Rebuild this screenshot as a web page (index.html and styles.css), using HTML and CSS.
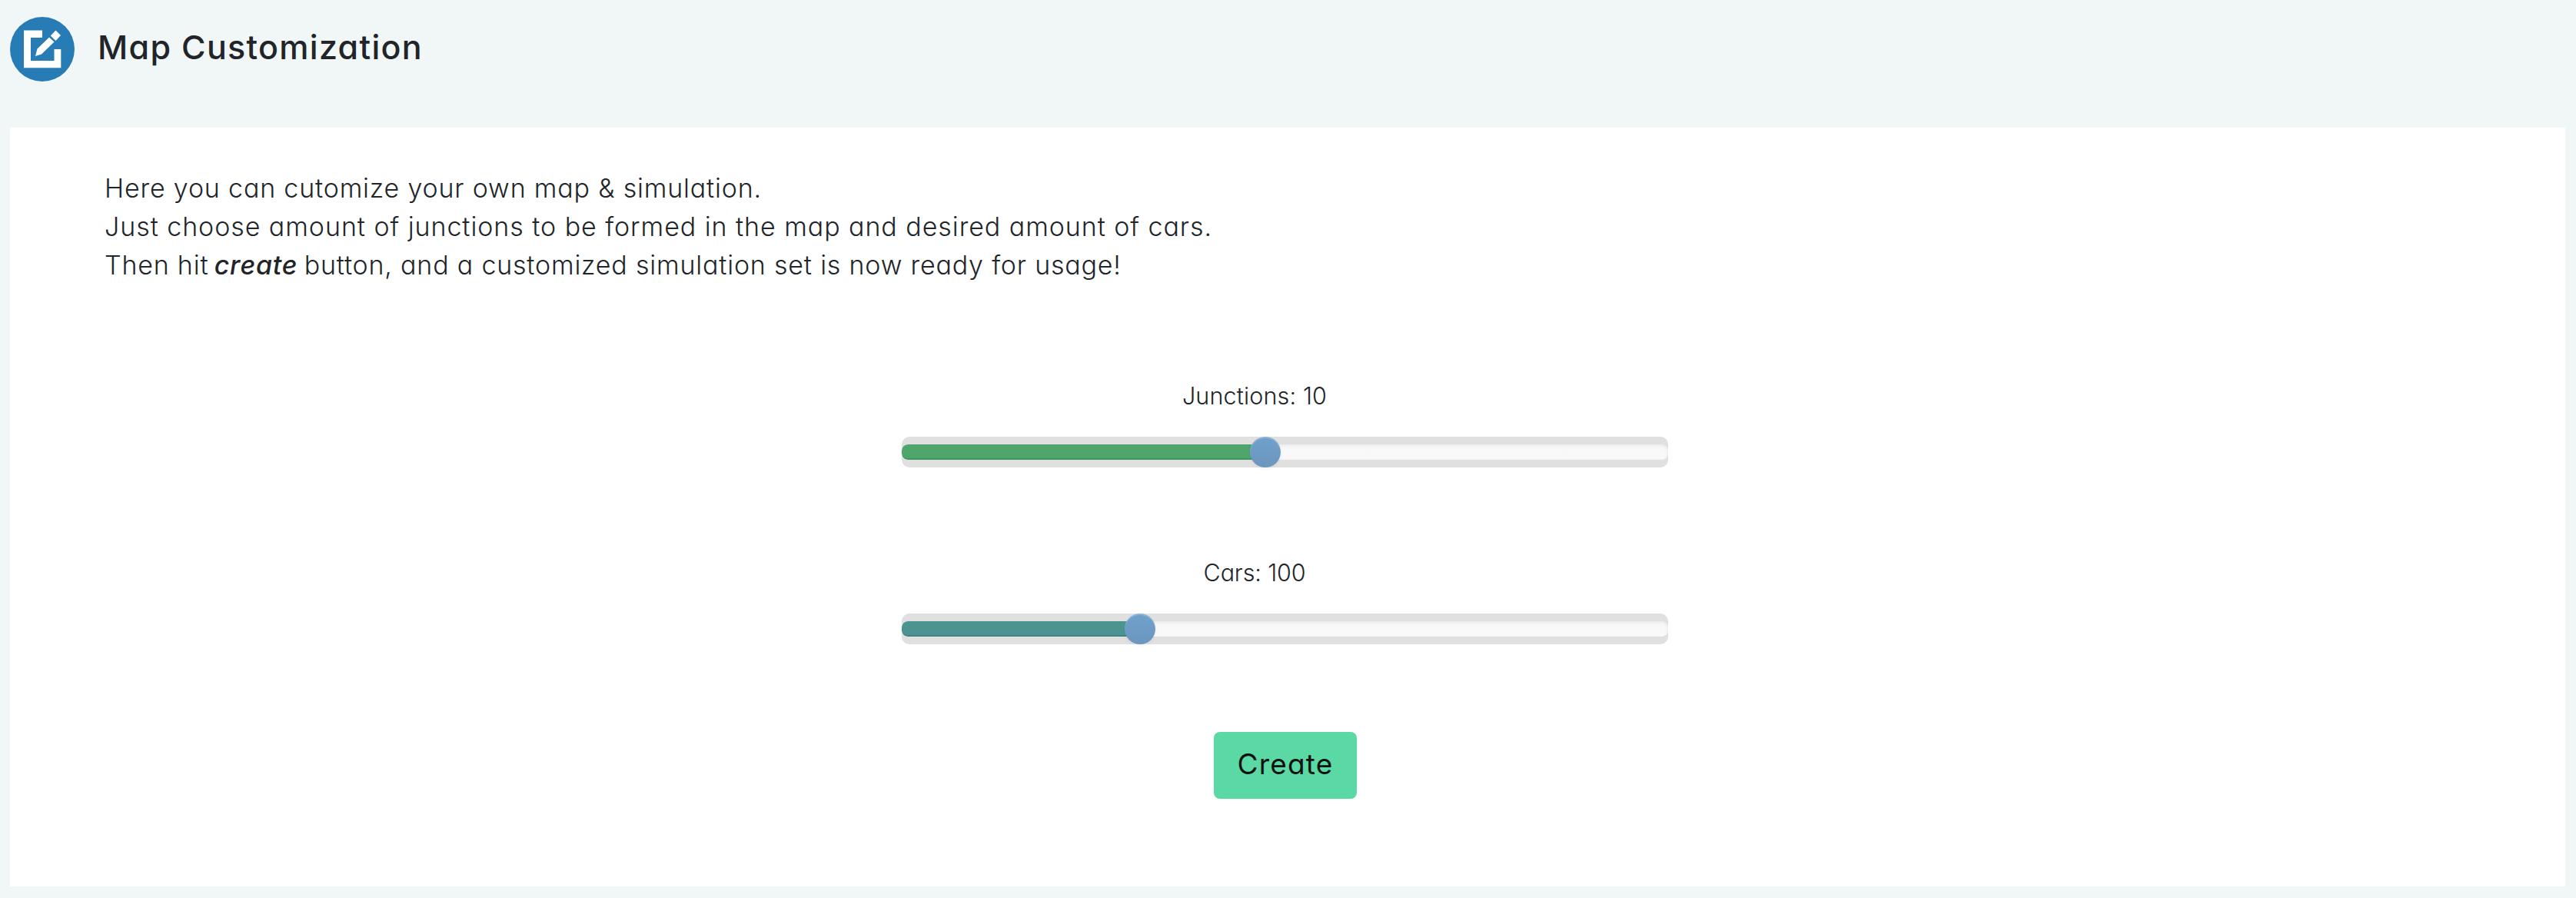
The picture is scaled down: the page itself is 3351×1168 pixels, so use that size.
FILE: index.html
```html
<!DOCTYPE html>
<html lang="en">
<head>
<meta charset="utf-8">
<title>Map Customization</title>
<link rel="stylesheet" href="styles.css">
</head>
<body>
<header class="page-header">
  <svg class="page-icon" viewBox="0 0 84 84" aria-hidden="true">
    <circle cx="42" cy="42" r="42" fill="#277cb6"/>
    <path fill="#fff" d="M18 17.5H42V27H27V57H57.500V42H66.300V66.300H18Z"/>
    <path fill="#fff" d="M51 26.500L57.500 32.500L41 48.500L33 51L35.500 41.500Z"/>
    <path fill="#fff" d="M59.500 17.500L66 24L59.500 31L52.800 24.500Z"/>
  </svg>
  <h1 class="page-title">Map Customization</h1>
</header>
<main class="panel">
  <div class="intro">
    <p class="line-one">Here you can cutomize your own map &amp; simulation.</p>
    <p class="line-two">Just choose amount of junctions to be formed in the map and desired amount of cars.</p>
    <p>Then hit <em>create</em> button, and a customized simulation set is now ready for usage!</p>
  </div>
  <form class="controls">
    <div class="field">
      <label class="label">Junctions: 10</label>
      <div class="slider">
        <div class="track"><div class="fill fill-junctions" style="width: 47.450%"></div></div>
        <div class="handle" style="left: 47.450%"></div>
      </div>
    </div>
    <div class="field">
      <label class="label label-cars">Cars: 100</label>
      <div class="slider">
        <div class="track"><div class="fill fill-cars" style="width: 31.090%"></div></div>
        <div class="handle" style="left: 31.090%"></div>
      </div>
    </div>
    <button class="create" type="button">Create</button>
  </form>
</main>
</body>
</html>
```
FILE: styles.css
```css
* {
  box-sizing: border-box;
}

body {
  margin: 0;
  height: 1168px;
  padding: 22px 14px 15px 13px;
  display: flex;
  flex-direction: column;
  background: #f1f7f7;
  color: #212529;
  font: 300 34px/50px Inter, sans-serif;
  font-feature-settings: "cv11";
}

.page-header {
  display: flex;
  align-items: flex-start;
  gap: 30px;
  height: 144px;
}

.page-icon {
  width: 84px;
  height: 84px;
}

.page-title {
  margin: 14px 0 0;
  font-size: 43px;
  font-weight: 500;
  line-height: 50px;
  letter-spacing: 1.3px;
}

.panel {
  flex: 1;
  padding: 54px 7px 0 0;
  background: #fff;
}

.intro {
  padding-left: 123px;
  letter-spacing: 0.79px;
}

.intro p {
  margin: 0;
}

.intro .line-one {
  letter-spacing: 0.81px;
}

.intro .line-two {
  letter-spacing: 0.93px;
}

.intro em {
  margin: 0 -2px 0 -3px;
  font-weight: 500;
}

.controls {
  display: flex;
  flex-direction: column;
  align-items: center;
  gap: 114px;
  margin-top: 122px;
}

.field {
  width: 997px;
}

.label {
  display: block;
  margin-bottom: 30px;
  padding-right: 79px;
  text-align: center;
  font-size: 30.5px;
  line-height: 46px;
  letter-spacing: 0.15px;
}

.label-cars {
  letter-spacing: -0.15px;
}

.slider {
  position: relative;
  height: 40px;
  padding: 10px 0;
  border-radius: 10px;
  background: #e0e0e0;
}

.track {
  height: 20px;
  border-radius: 8px;
  overflow: hidden;
  background: linear-gradient(#f7f7f7, #fafafa);
  box-shadow: inset 0 1px 4px rgba(0, 0, 0, 0.08);
}

.fill {
  height: 100%;
  border-radius: 8px 0 0 8px;
  box-shadow: inset 0 -2px 0 rgba(0, 0, 0, 0.1);
}

.fill-junctions {
  background: #4ea66d;
}

.fill-cars {
  background: #4d9491;
}

.handle {
  position: absolute;
  top: 0;
  width: 40px;
  height: 40px;
  margin-left: -20px;
  border-radius: 50%;
  background: linear-gradient(#6fa1cd, #6c96bd);
  box-shadow: inset 0 2px 0 rgba(255, 255, 255, 0.2), 0 2px 4px rgba(0, 0, 0, 0.05);
}

.create {
  width: 186px;
  height: 87px;
  padding: 0 0 3px 1px;
  border: 0;
  border-radius: 8px;
  background: #5ad9a4;
  color: #111;
  font: 400 37px/50px Inter, sans-serif;
  font-feature-settings: "cv11";
  letter-spacing: 1.2px;
}
```
